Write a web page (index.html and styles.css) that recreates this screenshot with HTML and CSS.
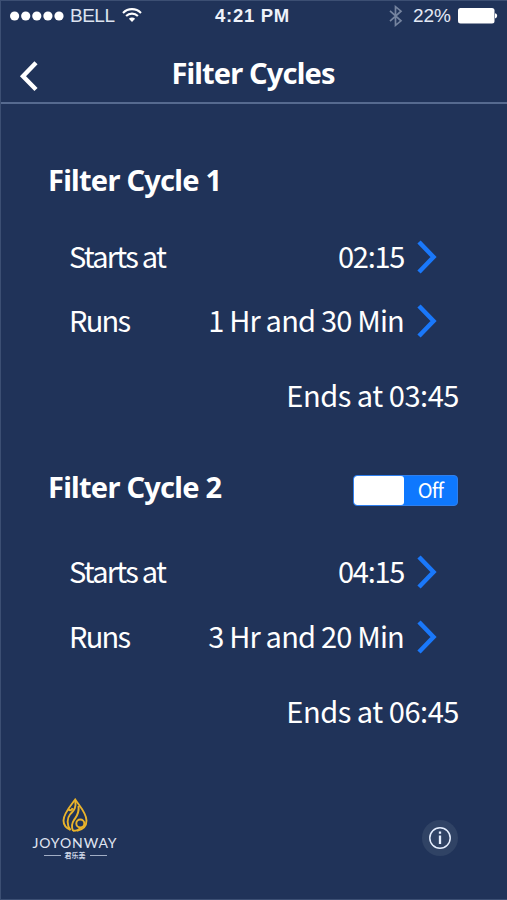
FILE: index.html
```html
<!DOCTYPE html>
<html lang="en">
<head>
<meta charset="utf-8">
<title>Filter Cycles</title>
<link rel="stylesheet" href="styles.css">
</head>
<body>
<div class="screen">
  <div class="status">
    <div class="status-left">
      <svg class="dots" width="54" height="10" viewBox="0 0 54 10" fill="#fff"><circle cx="4.6" cy="5" r="4.6"/><circle cx="15.7" cy="5" r="4.6"/><circle cx="26.8" cy="5" r="4.6"/><circle cx="37.9" cy="5" r="4.6"/><circle cx="49" cy="5" r="4.6"/></svg>
      <span class="carrier">BELL</span>
      <svg class="wifi" width="20" height="16" viewBox="0 0 20 16" fill="none" stroke="#fff" stroke-width="2.1"><path d="M1 5.900a12.700 12.700 0 0 1 18 0"/><path d="M4.100 9.100a8.300 8.300 0 0 1 11.800 0"/><path d="M10 15l-3.100-3.200a4.400 4.400 0 0 1 6.200 0z" fill="#fff" stroke="none"/></svg>
    </div>
    <span class="clock">4:21 PM</span>
    <div class="status-right">
      <svg class="bluetooth" width="14" height="22" viewBox="0 0 14 22" fill="none" stroke="#75849f" stroke-width="1.7"><path d="M1 5.800l11 10-5.500 4.500V1.700L12 6.200l-11 10"/></svg>
      <span class="percent">22%</span>
      <svg class="battery" width="40" height="16" viewBox="0 0 40 16" fill="#fff"><rect x="0" y="0" width="36.500" height="15.600" rx="2.500"/><path d="M37 5.200q2.200.4 2.200 2.600t-2.200 2.600z"/></svg>
    </div>
  </div>
  <header class="header">
    <svg class="back" width="20" height="32" viewBox="0 0 20 32" fill="none" stroke="#fff" stroke-width="4.400"><path d="M17 2.800L4 16.200 17 29.500"/></svg>
    <h1 class="title">Filter Cycles</h1>
  </header>
  <main class="content">
    <section class="cycle">
      <div class="cycle-head"><h2 class="heading">Filter Cycle 1</h2></div>
      <div class="row"><span class="label">Starts at</span><span class="value time">02:15</span><svg class="chevron" width="20" height="34" viewBox="0 0 20 34"><path d="M2 2l14.500 15L2 32"/></svg></div>
      <div class="row"><span class="label">Runs</span><span class="value">1 Hr and 30 Min</span><svg class="chevron" width="20" height="34" viewBox="0 0 20 34"><path d="M2 2l14.500 15L2 32"/></svg></div>
      <div class="ends">Ends at 03:45</div>
    </section>
    <section class="cycle second">
      <div class="cycle-head"><h2 class="heading">Filter Cycle 2</h2><div class="switch"><span class="thumb"></span><span class="state">Off</span></div></div>
      <div class="row"><span class="label">Starts at</span><span class="value time">04:15</span><svg class="chevron" width="20" height="34" viewBox="0 0 20 34"><path d="M2 2l14.500 15L2 32"/></svg></div>
      <div class="row"><span class="label">Runs</span><span class="value">3 Hr and 20 Min</span><svg class="chevron" width="20" height="34" viewBox="0 0 20 34"><path d="M2 2l14.500 15L2 32"/></svg></div>
      <div class="ends">Ends at 06:45</div>
    </section>
  </main>
  <footer class="footer">
    <div class="brand">
      <svg class="flame" width="26" height="34" viewBox="0 0 26 34" fill="none" stroke="#e9b32b" stroke-width="1.9"><path d="M8.500 32C4 30 1.500 26.500 1.500 22.500 1.500 15.500 8.500 8 13.200 1.500 17.500 8 24.500 15 24.500 22.500c0 5-3.600 9-9.500 10.300"/><path d="M6.500 11.500c1.500 1.500 3.500.5 4-1.500"/><path d="M13.200 2c1.500 9-2.200 11-5.200 14.500S4.500 27 8.500 32"/><path d="M16.500 8c1 8-2.500 11-4.500 14s-2.500 7.500-1 10.800"/><circle cx="18.300" cy="25.500" r="4"/><path d="M11 32.800c4.500 0 6.500-1.300 7.500-3.400"/></svg>
      <span class="brand-name">JOYONWAY</span>
      <div class="brand-sub"><i class="rule"></i><span lang="zh">君乐美</span><i class="rule"></i></div>
    </div>
    <div class="info"><svg width="24" height="24" viewBox="0 0 24 24"><circle cx="12" cy="12" r="10.200" fill="none" stroke="#e6efff" stroke-width="1.500"/><path d="M12 9.500v8.500M12 5.500v2.300" stroke="#e6efff" stroke-width="2.300"/></svg></div>
  </footer>
</div>
</body>
</html>
```

FILE: styles.css
```css
* { box-sizing: border-box; }
body { margin: 0; background: #203359; }
.screen {
  width: 507px; height: 900px; display: flex; flex-direction: column; overflow: hidden;
  background: #203359; color: #fff; border: 1px solid #3c4f73; border-width: 1px 0 1px 1px;
  font-family: "Noto Sans CJK SC", "Noto Sans", sans-serif;
}
svg { display: block; flex: none; }
h1, h2 { margin: 0; font-family: "Noto Sans", sans-serif; }
span, h1, h2, .ends { white-space: nowrap; }
.status {
  height: 30px; padding: 0 9px; display: grid; grid-template-columns: 1fr auto 1fr; align-items: center;
  font-family: "Liberation Sans", sans-serif; font-size: 19px; line-height: 30px;
}
.status-left, .status-right { display: flex; align-items: center; }
.status-right { justify-content: flex-end; }
.carrier { margin-left: 6px; color: #dce3f0; letter-spacing: -0.5px; }
.wifi { margin-left: 8px; margin-top: -3px; }
.clock { font-weight: bold; font-size: 18.5px; letter-spacing: 0.7px; margin-left: -3px; color: #eef2fa; }
.percent { margin: 0 7px 0 10px; color: #e4e9f4; }
.header { height: 73px; padding: 22px 0 0 18px; display: flex; border-bottom: 2px solid #566a8f; }
.back { margin-top: 7px; }
.title { flex: 1; margin-right: 40px; line-height: 40px; text-align: center; font-size: 29px; letter-spacing: -0.85px; }
.content { padding: 56px 48px 0 47px; }
.cycle-head { height: 40px; display: flex; justify-content: space-between; align-items: center; }
.heading { font-size: 29px; line-height: 40px; letter-spacing: -0.75px; }
.row { height: 40px; display: flex; align-items: center; padding: 0 22px 0 21px; margin-top: 36px; font-size: 29px; line-height: 40px; }
.row + .row { margin-top: 24px; }
.row span { margin-bottom: 2px; }
.label { flex: 1; letter-spacing: -1.750px; }
.value { letter-spacing: -0.800px; }
.time { letter-spacing: -1.300px; }
.chevron { margin: 2px 0 0 13px; fill: none; stroke: #1a78fa; stroke-width: 4.500; }
.ends { margin-top: 34px; font-size: 29px; line-height: 40px; text-align: right; letter-spacing: -0.450px; }
.second { margin-top: 53px; }
.second .row { margin-top: 44px; }
.second .row + .row { margin-top: 25px; }
.switch { width: 105px; height: 31px; margin: 6px 1px 0 0; display: flex; border: 1px solid #2f7fed; border-radius: 4px; background: #0e78fe; overflow: hidden; }
.thumb { width: 50px; background: #fff; border-radius: 3px; }
.state { flex: 1; text-align: center; font-size: 20px; line-height: 28px; letter-spacing: -0.800px; }
.footer { display: flex; justify-content: space-between; align-items: flex-start; padding: 68px 49px 0 31px; }
.brand { width: 86px; display: flex; flex-direction: column; align-items: center; }
.brand-name { font-family: Lato, sans-serif; font-size: 14px; line-height: 16px; letter-spacing: 0.9px; margin: 3px 0 0; color: #e0e6f2; }
.brand-sub { display: flex; align-items: center; gap: 4px; font-size: 7px; line-height: 9px; font-weight: bold; color: #cfd8e8; }
.rule { width: 17px; height: 1px; background: #a2aec5; }
.info { width: 36px; height: 36px; margin-top: 22px; border-radius: 50%; background: #304365; display: flex; align-items: center; justify-content: center; }
```
